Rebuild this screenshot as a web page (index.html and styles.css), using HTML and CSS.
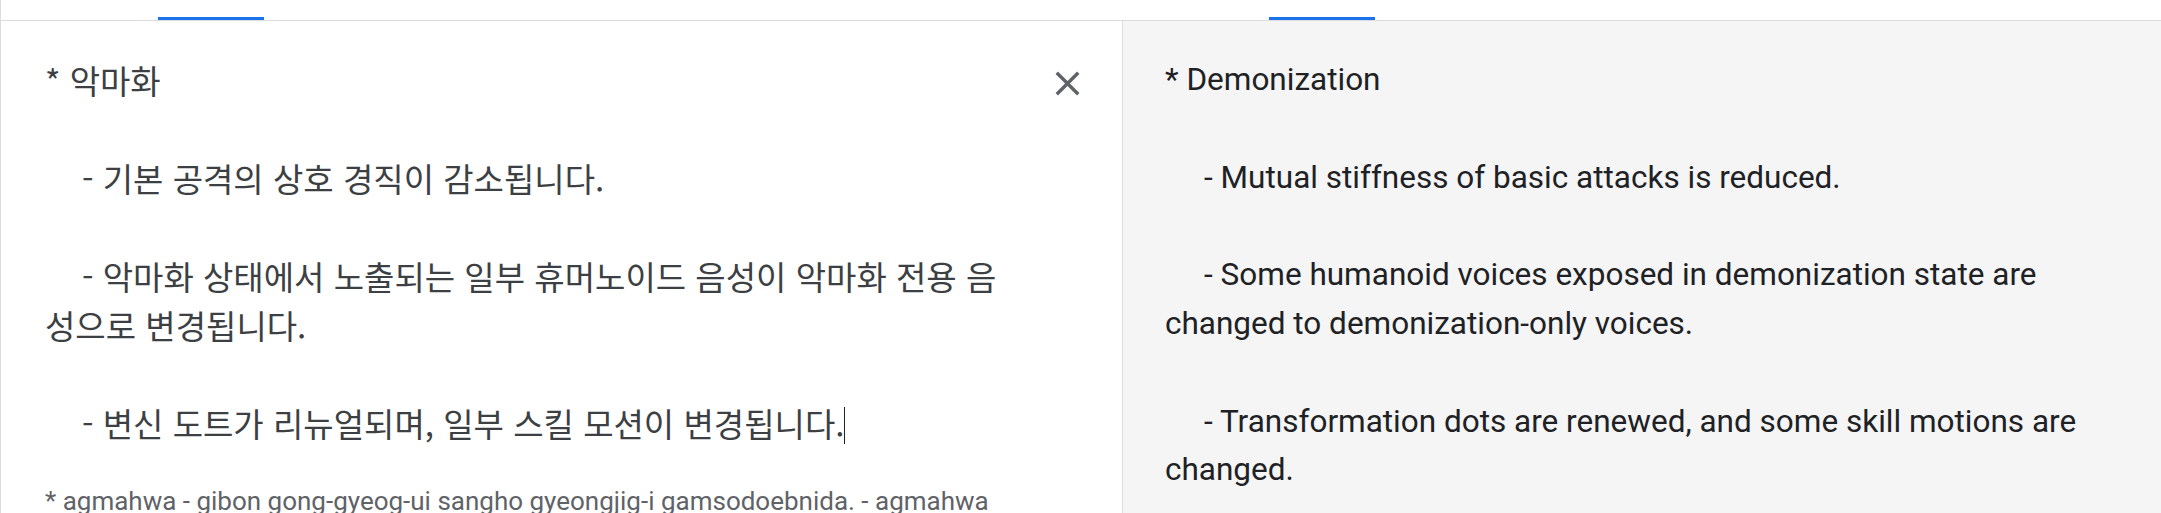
FILE: index.html
```html
<!DOCTYPE html>
<html lang="ko">
  <head>
    <meta charset="UTF-8" />
    <meta name="viewport" content="width=device-width, initial-scale=1.0" />
    <title>Translate</title>
    <link rel="stylesheet" href="styles.css">
  </head>
  <body>
    <div class="translator">
      <!-- language tab strip, only the active underlines are visible -->
      <div class="tabs">
        <div class="tab-side source-tabs"><span class="tab-active"></span></div>
        <div class="tab-side target-tabs"><span class="tab-active"></span></div>
      </div>

      <div class="panes">
        <div class="source-pane">
          <div class="source-body">
            <div class="source-text">* 악마화

    - 기본 공격의 상호 경직이 감소됩니다.

    - 악마화 상태에서 노출되는 일부 휴머노이드 음성이 악마화 전용 음성으로 변경됩니다.

    - 변신 도트가 리뉴얼되며, 일부 스킬 모션이 변경됩니다.<span class="caret"></span></div>
            <div class="romanization">* agmahwa - gibon gong-gyeog-ui sangho gyeongjig-i gamsodoebnida. - agmahwa sangtaeeseo nochuldoeneun ilbu hyumeonoideu eumseong-i agmahwa jeon-yong eumseong-eulo byeongyeongdoebnida.</div>
          </div>
          <button class="clear-btn" aria-label="Clear source text">
            <svg viewBox="0 0 24 24" width="41" height="41">
              <path d="M19 6.41L17.59 5 12 10.59 6.41 5 5 6.41 10.59 12 5 17.59 6.41 19 12 13.41 17.59 19 19 17.59 13.41 12z" />
            </svg>
          </button>
        </div>

        <div class="target-pane">
          <div class="target-text">* Demonization

     - Mutual stiffness of basic attacks is reduced.

     - Some humanoid voices exposed in demonization state are changed to demonization-only voices.

     - Transformation dots are renewed, and some skill motions are changed.</div>
        </div>
      </div>
    </div>
  </body>
</html>
```

FILE: styles.css
```css
body {
  margin: 0;
  font-family: Roboto, Arial, sans-serif;
  background-color: #fff;
  overflow: hidden;
}

.translator {
  border-left: 1px solid #dadce0;
  height: 513px;
  box-sizing: border-box;
  overflow: hidden;
}

/* tab strip */
.tabs {
  display: grid;
  grid-template-columns: 1121px 1fr;
  height: 20px;
  border-bottom: 1px solid #dadce0;
}

.tab-side {
  display: flex;
  align-items: flex-end;
}

.tab-active {
  display: block;
  width: 106px;
  height: 3px;
  background-color: #1a73e8;
}

.source-tabs .tab-active {
  margin-left: 157px;
}

.target-tabs .tab-active {
  margin-left: 147px;
}

/* text panes */
.panes {
  display: grid;
  grid-template-columns: 1121px 1fr;
  height: 492px;
  overflow: hidden;
}

.source-pane {
  display: flex;
  padding: 35px 0 0 44px;
  overflow: hidden;
}

.source-body {
  flex: 1;
  min-width: 0;
}

.source-text {
  font-family: "Noto Sans CJK KR", sans-serif;
  font-size: 33px;
  line-height: 49px;
  color: #3c4043;
  white-space: pre-wrap;
}

.caret {
  display: inline-block;
  width: 1px;
  height: 37px;
  background-color: #202124;
  vertical-align: -7px;
}

.romanization {
  margin-top: 36px;
  font-size: 26px;
  line-height: 34px;
  color: #5f6368;
}

.clear-btn {
  width: 48px;
  height: 48px;
  margin: 3px 31px 0 22px;
  padding: 0;
  border: none;
  background: none;
  display: flex;
  align-items: center;
  justify-content: center;
  cursor: pointer;
  flex-shrink: 0;
}

.clear-btn svg {
  fill: #5f6368;
}

.target-pane {
  background-color: #f5f5f5;
  border-left: 1px solid #dadce0;
  padding: 35px 43px 0 42px;
}

.target-text {
  font-size: 31.5px;
  line-height: 48.8px;
  color: #202124;
  white-space: pre-wrap;
}
```
